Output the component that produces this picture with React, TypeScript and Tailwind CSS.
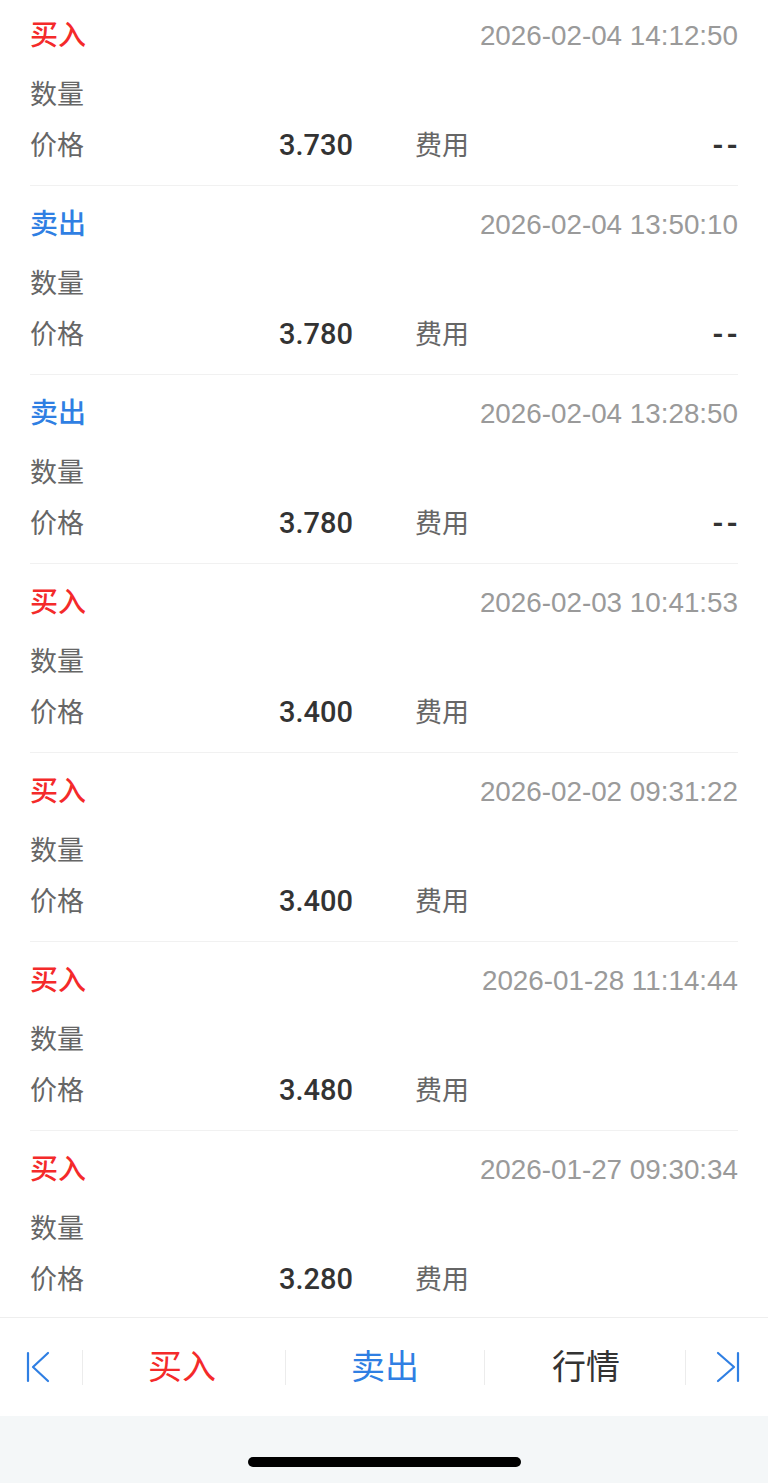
type Trade = {
  side: "buy" | "sell";
  time: string;
  price: string;
  fee?: string;
};

const trades: Trade[] = [
  { side: "buy", time: "2026-02-04 14:12:50", price: "3.730", fee: "--" },
  { side: "sell", time: "2026-02-04 13:50:10", price: "3.780", fee: "--" },
  { side: "sell", time: "2026-02-04 13:28:50", price: "3.780", fee: "--" },
  { side: "buy", time: "2026-02-03 10:41:53", price: "3.400" },
  { side: "buy", time: "2026-02-02 09:31:22", price: "3.400" },
  { side: "buy", time: "2026-01-28 11:14:44", price: "3.480" },
  { side: "buy", time: "2026-01-27 09:30:34", price: "3.280" },
];

function TradeRow({ trade }: { trade: Trade }) {
  const isBuy = trade.side === "buy";
  return (
    <div className="pt-[16px] pb-[3px]">
      <div className="flex h-[40px] items-center justify-between">
        <span
          className={`text-[28px] font-medium ${isBuy ? "text-[#f42a2a]" : "text-[#2f7fe3]"}`}
        >
          {isBuy ? "买入" : "卖出"}
        </span>
        <span className="text-[27.8px] text-[#9a9a9a]">{trade.time}</span>
      </div>
      <div className="mt-[19px] flex h-[40px] items-center text-[27px] text-[#666]">
        数量
      </div>
      <div className="mt-[9px] grid h-[40px] grid-cols-2 text-[27px] text-[#666]">
        <div className="flex items-center justify-between pr-[31px]">
          <span>价格</span>
          <span className="font-['Roboto',sans-serif] text-[29px] font-medium text-[#333]">
            {trade.price}
          </span>
        </div>
        <div className="flex items-center justify-between pl-[31px]">
          <span>费用</span>
          {trade.fee && (
            <span className="font-['Roboto',sans-serif] text-[29px] font-bold tracking-[3px] text-[#333] -mr-[3px]">
              {trade.fee}
            </span>
          )}
        </div>
      </div>
      <div className="mt-[21px] h-px bg-[#f1f1f1]" />
    </div>
  );
}

function FirstIcon() {
  return (
    <svg width="24" height="32" viewBox="0 0 24 32" fill="none" stroke="#2f7fe3" strokeWidth="2.2" strokeLinecap="round" strokeLinejoin="round">
      <line x1="2" y1="2" x2="2" y2="30" />
      <polyline points="22,2 7,16 22,30" />
    </svg>
  );
}

function LastIcon() {
  return (
    <svg width="24" height="32" viewBox="0 0 24 32" fill="none" stroke="#2f7fe3" strokeWidth="2.2" strokeLinecap="round" strokeLinejoin="round">
      <polyline points="2,2 18,16 2,30" />
      <line x1="22" y1="2" x2="22" y2="30" />
    </svg>
  );
}

function Divider() {
  return <div className="h-[35px] w-px bg-[#ececec]" />;
}

export default function App() {
  return (
    <div className="flex h-[1483px] w-[768px] flex-col bg-white font-['Liberation_Sans','Noto_Sans_CJK_SC',sans-serif]">
      <div className="flex-1 overflow-hidden px-[30px]">
        {trades.map((t, i) => (
          <TradeRow key={i} trade={t} />
        ))}
      </div>

      <div className="flex h-[99px] items-center border-t border-[#eeeeee] bg-white">
        <div className="flex w-[82px] items-center pl-[26px]">
          <FirstIcon />
        </div>
        <Divider />
        <div className="flex flex-1 justify-center pr-[4px] text-[34px] text-[#f42a2a]">买入</div>
        <Divider />
        <div className="flex flex-1 justify-center text-[34px] text-[#2f7fe3]">卖出</div>
        <Divider />
        <div className="flex flex-1 justify-center pl-[2px] text-[34px] text-[#333]">行情</div>
        <Divider />
        <div className="flex w-[82px] items-center pl-[30px]">
          <LastIcon />
        </div>
      </div>

      <div className="flex h-[67px] justify-center bg-[#f4f7f8] pt-[41px]">
        <div className="h-[10px] w-[273px] rounded-full bg-black" />
      </div>
    </div>
  );
}
